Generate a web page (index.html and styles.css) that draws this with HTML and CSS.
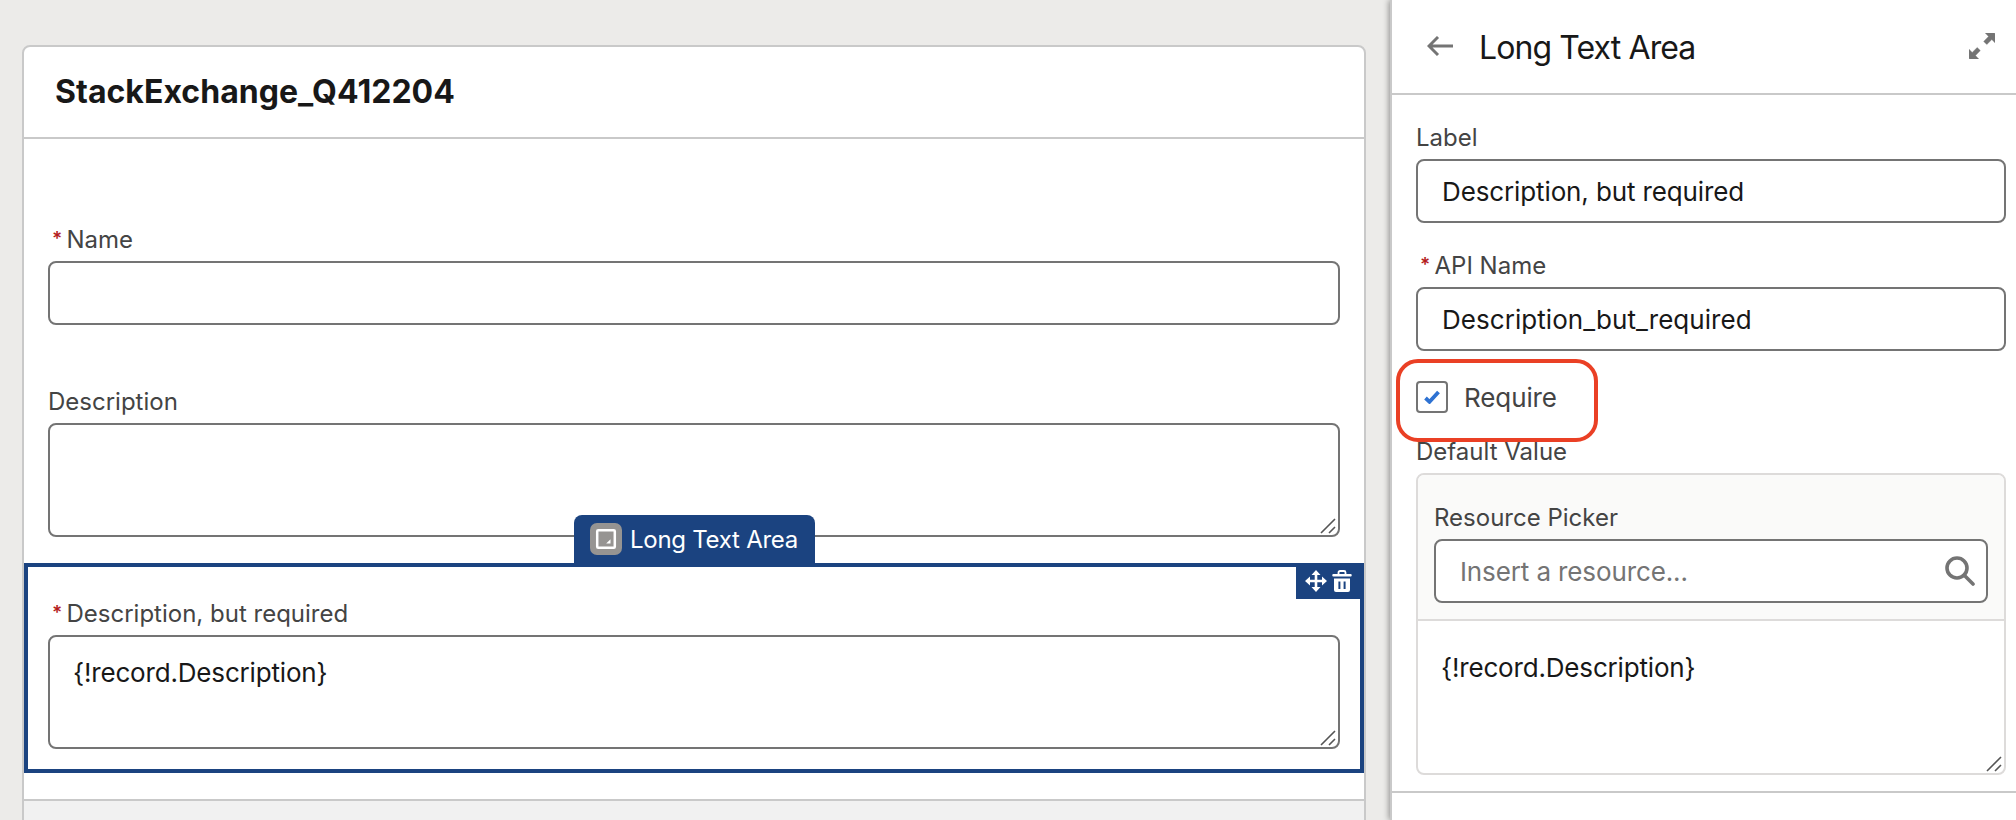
FILE: index.html
```html
<!DOCTYPE html>
<html lang="en">
<head>
<meta charset="utf-8">
<title>Screen editor</title>
<link rel="stylesheet" href="styles.css">
</head>
<body>
<div class="app">
  <main class="canvas">
    <section class="screen">
      <h1 class="screen-title"><span>StackExchange_Q412204</span></h1>
      <div class="screen-body">
        <div class="field field-name">
          <div class="label required"><span class="star">*</span><span>Name</span></div>
          <div class="input"></div>
        </div>
        <div class="field field-description">
          <div class="label"><span>Description</span></div>
          <div class="input textarea"><svg class="grip" viewBox="0 0 16 16"><path d="M1 15 15 1M9 15l6-6"/></svg></div>
        </div>
        <div class="selected">
          <div class="tab">
            <svg class="tab-icon" viewBox="0 0 32 32"><rect width="32" height="32" rx="7" fill="#969492"/><rect x="7.200" y="7.200" width="17.600" height="17.600" rx="1" fill="none" stroke="#fff" stroke-width="2.500"/><path d="M20.500 16.200v4.300h-4.300z" fill="#fff"/></svg>
            <span>Long Text Area</span>
          </div>
          <div class="tools">
            <svg class="tool" viewBox="0 0 22 22"><path d="M11 3v16M3 11h16" stroke="#fff" stroke-width="2.600"/><path d="M11 0l4.500 5h-9zM11 22l4.500-5h-9zM0 11l5-4.500v9zM22 11l-5-4.500v9z" fill="#fff"/></svg>
            <svg class="tool" viewBox="0 0 22 22"><path d="M7.500 4V2.500a1.500 1.500 0 0 1 1.500-1.500h4a1.500 1.500 0 0 1 1.500 1.500V4" fill="none" stroke="#fff" stroke-width="1.800"/><rect x="1.300" y="4" width="19.400" height="2.600" rx="1" fill="#fff"/><path fill-rule="evenodd" d="M3 8.400h16V20a2 2 0 0 1-2 2H5a2 2 0 0 1-2-2zM7.400 11.500v7.500h2v-7.500zM12.600 11.500v7.500h2v-7.500z" fill="#fff"/></svg>
          </div>
          <div class="label required"><span class="star">*</span><span>Description, but required</span></div>
          <div class="input textarea"><span class="merge">{!record.Description}</span><svg class="grip" viewBox="0 0 16 16"><path d="M1 15 15 1M9 15l6-6"/></svg></div>
        </div>
      </div>
      <div class="screen-footer"></div>
    </section>
  </main>
  <aside class="panel">
    <header class="panel-header">
      <svg class="back" viewBox="0 0 26 20"><path d="M26 10H3M11 1 2 10l9 9" fill="none" stroke="#747474" stroke-width="2.900"/></svg>
      <h2 class="panel-title"><span>Long Text Area</span></h2>
      <svg class="expand" viewBox="0 0 26 26"><path d="M16.300 0H25.200a.8.800 0 0 1 .8.800V9.700L22.800 6.600 17.800 11.500 14.700 8.400 19.500 3.400zM9.700 26H.8a.8.800 0 0 1-.8-.8V16.300L3.200 19.400 8.200 14.500 11.300 17.600 6.500 22.600z" fill="#747474" stroke="#747474" stroke-width=".4" stroke-linejoin="round"/></svg>
    </header>
    <div class="panel-body">
      <div class="label"><span>Label</span></div>
      <div class="input"><span>Description, but required</span></div>
      <div class="label required api"><span class="star">*</span><span>API Name</span></div>
      <div class="input"><span class="api-value">Description_but_required</span></div>
      <div class="require">
        <span class="checkbox"><svg viewBox="0 0 16 14"><path d="M1.500 8 5.500 11.800 14.500 2" fill="none" stroke="#2e72d2" stroke-width="3.800"/></svg></span>
        <span class="require-text">Require</span>
        <div class="highlight"></div>
      </div>
      <div class="label default-label"><span>Default Value</span></div>
      <div class="default-box">
        <div class="picker">
          <div class="label"><span>Resource Picker</span></div>
          <div class="input search"><span>Insert a resource...</span><svg class="search-icon" viewBox="0 0 30 30"><circle cx="12" cy="12" r="10" fill="none" stroke="#747474" stroke-width="3.600"/><path d="M19 19l9 9" stroke="#747474" stroke-width="3.600" stroke-linecap="round"/></svg></div>
        </div>
        <div class="default-value"><span class="merge">{!record.Description}</span><svg class="grip" viewBox="0 0 16 16"><path d="M1 15 15 1M9 15l6-6"/></svg></div>
      </div>
    </div>
  </aside>
</div>
</body>
</html>
```
FILE: styles.css
```css
* { box-sizing: border-box; }
body { margin: 0; font-family: Inter, "Liberation Sans", sans-serif; color: #181818; }
svg { display: block; flex: none; }
.app { display: flex; width: 2016px; height: 820px; overflow: hidden; background: #ecebe9; }
.canvas { width: 1390px; padding: 45px 24px 0 22px; }
.screen { height: 800px; border: 2px solid #c9c9c9; border-radius: 8px 8px 0 0; background: #fff; }
.screen-title { margin: 0; height: 92px; padding-left: 31px; border-bottom: 2px solid #c9c9c9; font-size: 32px; font-weight: 700; line-height: 90px; letter-spacing: 0.03px; }
.screen-body { height: 660px; padding-top: 83px; }
.field { padding: 0 24px; }
.field-description { margin-top: 59px; }
.label { height: 35px; margin-bottom: 4px; font-size: 24px; line-height: 35px; color: #444; white-space: nowrap; }
.required { display: flex; padding-left: 4px; }
.star { width: 14.500px; font-size: 19px; font-weight: 600; line-height: 33px; color: #b41c1c; }
.input { display: flex; align-items: center; height: 64px; padding: 0 24px; border: 2px solid #747474; border-radius: 8px; background: #fff; font-size: 26px; letter-spacing: -0.12px; white-space: nowrap; }
.api-value { letter-spacing: 0.05px; }
.merge { letter-spacing: -0.17px; }
.textarea { position: relative; align-items: flex-start; height: 114px; padding: 16px 23px; line-height: 40px; }
.grip { position: absolute; right: 2px; bottom: 1px; width: 16px; height: 16px; fill: none; stroke: #555; stroke-width: 1.600; }
.selected { position: relative; height: 210px; margin-top: 26px; padding: 29px 20px 0; border: 4px solid #1b4380; }
.tab { position: absolute; left: 546px; top: -52px; display: flex; align-items: center; gap: 8px; width: 241px; height: 50px; padding: 0 0 2px 16px; border-radius: 8px 8px 0 0; background: #1b4380; color: #fff; font-size: 24px; letter-spacing: -0.27px; white-space: nowrap; }
.tab-icon { width: 32px; height: 32px; }
.tools { position: absolute; right: -4px; top: -4px; display: flex; gap: 4px; width: 68px; height: 36px; padding: 7px 0 0 9px; background: #1b4380; }
.tool { width: 22px; height: 22px; }
.screen-footer { height: 60px; border-top: 2px solid #c9c9c9; background: #f1f1f1; }
.panel { width: 626px; border-left: 2px solid #c9c9c9; background: #fff; box-shadow: -1px 0 6px rgba(0, 0, 0, .4); }
.panel-header { display: flex; align-items: center; height: 95px; padding: 0 21px 2px 35px; border-bottom: 2px solid #c9c9c9; }
.back { width: 26px; height: 20px; }
.panel-title { flex: 1; margin: 0 0 0 26px; padding-top: 4px; font-size: 32px; font-weight: 400; line-height: 40px; letter-spacing: -0.9px; }
.expand { width: 26px; height: 26px; }
.panel-body { height: 698px; padding: 25px 10px 0 24px; border-bottom: 2px solid #c9c9c9; }
.api { margin-top: 25px; }
.require { position: relative; display: flex; align-items: center; height: 32px; margin-top: 30px; gap: 16px; font-size: 26px; letter-spacing: -0.1px; color: #444; }
.checkbox { display: flex; align-items: center; justify-content: center; width: 32px; height: 32px; border: 2px solid #747474; border-radius: 4px; }
.checkbox svg { width: 16px; height: 14px; }
.highlight { position: absolute; left: -20px; top: -22px; width: 202px; height: 83px; border: 4px solid #ea4025; border-radius: 22px; }
.default-label { margin-top: 21px; }
.default-box { height: 302px; margin-top: 3px; border: 2px solid #dddbda; border-radius: 8px; overflow: hidden; }
.picker { height: 146px; padding: 25px 16px 0; border-bottom: 2px solid #dddbda; background: #fafaf9; }
.search { justify-content: space-between; padding: 0 11px 0 24px; color: #747474; }
.search-icon { width: 30px; height: 30px; }
.default-value { position: relative; height: 152px; padding: 27px 23px; font-size: 26px; line-height: 40px; }
```
